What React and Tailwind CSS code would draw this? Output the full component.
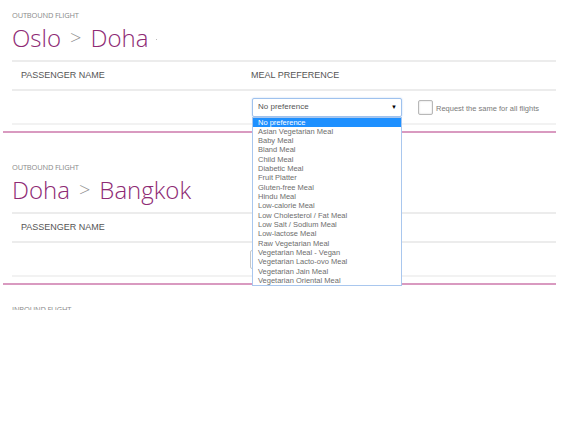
const meals = [
  "No preference",
  "Asian Vegetarian Meal",
  "Baby Meal",
  "Bland Meal",
  "Child Meal",
  "Diabetic Meal",
  "Fruit Platter",
  "Gluten-free Meal",
  "Hindu Meal",
  "Low-calorie Meal",
  "Low Cholesterol / Fat Meal",
  "Low Salt / Sodium Meal",
  "Low-lactose Meal",
  "Raw Vegetarian Meal",
  "Vegetarian Meal - Vegan",
  "Vegetarian Lacto-ovo Meal",
  "Vegetarian Jain Meal",
  "Vegetarian Oriental Meal",
]

const arial = "font-['Liberation_Sans',Arial,sans-serif]"

const FlightBlock = ({ label, from, to, open }) => (
  <div className="ml-[3px] w-[553px] border-b-2 border-[#d99ac0]">
    <div className="pl-[9px]">
      <div className="pt-[10px] text-[7.5px] leading-[10px] text-[#8a8a8a] font-['Open_Sans',sans-serif] tracking-tight">
        {label}
      </div>
      <div className="mt-[2px] h-[32px] flex items-center font-['Open_Sans',sans-serif] font-light text-[24px] leading-none text-[#8e2a74]">
        <span>{from}</span>
        <span className="mx-[9px] text-[#8f8f8f] text-[20px]">&gt;</span>
        <span>{to}</span>
        {open && <span className="ml-[8px] mt-[2px] w-[1px] h-[1px] bg-[#bbb]" />}
      </div>
      <div className="mt-[6px] border-t-2 border-[#ececec]">
        <div className={`grid grid-cols-[239px_1fr] h-[27px] items-center text-[9px] text-[#555] ${arial}`}>
          <span className="pl-[9px]">PASSENGER NAME</span>
          <span className={open ? "" : "pl-[3px]"}>MEAL PREFERENCE</span>
        </div>
        <div className="border-t-2 border-[#ececec] h-[34px] grid grid-cols-[239px_1fr] items-center">
          <span />
          <div className="flex items-center">
            <div className="relative">
              <div
                className={`w-[150px] h-[19px] flex items-center justify-between pl-[5px] pr-[4px] bg-white border rounded-[2px] ${arial} text-[8px] text-[#555] ${
                  open
                    ? "border-[#9fc2ee] shadow-[0_0_2px_#b9d3f3] ml-[1px]"
                    : "border-[#c8c8c8] -ml-[1px]"
                }`}
              >
                <span>No preference</span>
                <span className="text-[6px] text-black">▼</span>
              </div>
              {open && (
                <ul
                  className={`absolute left-[1px] top-[19px] z-10 w-[150px] bg-white border border-[#a9c7ee] ${arial} text-[7.5px] leading-[9.33px] text-[#6e6e6e]`}
                >
                  {meals.map((m, i) => (
                    <li
                      key={m}
                      className={`pl-[5px] ${i === 0 ? "bg-[#1e90ff] text-white" : ""}`}
                    >
                      {m}
                    </li>
                  ))}
                </ul>
              )}
            </div>
            {open && (
              <div className="ml-[16px] flex items-center">
                <span className="w-[15px] h-[15px] border border-[#b8b8b8] rounded-[2px] bg-white shadow-[inset_0_0_2px_#cfcfcf]" />
                <span className={`ml-[3px] mt-[3px] text-[7.5px] text-[#7a7a7a] ${arial}`}>
                  Request the same for all flights
                </span>
              </div>
            )}
          </div>
        </div>
        <div className="border-t-2 border-[#f2f2f2] h-[8px]" />
      </div>
    </div>
  </div>
)

export default function App() {
  return (
    <div className="w-[580px] h-[435px] bg-white">
      <div className="h-[310px] overflow-hidden">
        <FlightBlock label="OUTBOUND FLIGHT" from="Oslo" to="Doha" open />
        <div className="mt-[19px]">
          <FlightBlock label="OUTBOUND FLIGHT" from="Doha" to="Bangkok" />
        </div>
        <div className="pl-[12px] pt-[19px] text-[7.5px] leading-[10px] text-[#8a8a8a] font-['Open_Sans',sans-serif] tracking-tight">
          INBOUND FLIGHT
        </div>
      </div>
    </div>
  )
}
